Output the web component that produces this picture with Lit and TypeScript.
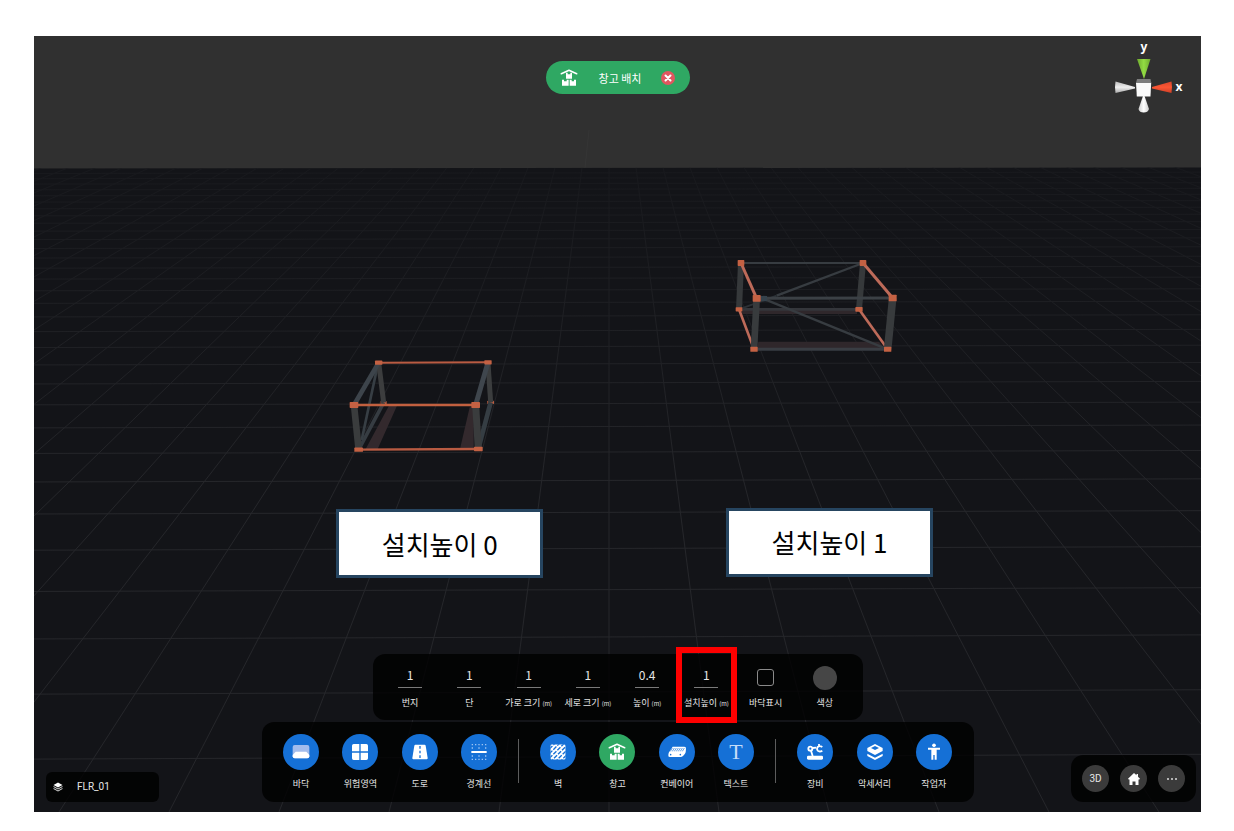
import { LitElement, html, svg, css, SVGTemplateResult } from "lit";
import { customElement, state } from "lit/decorators.js";
import { classMap } from "lit/directives/class-map.js";

type Point = [number, number];

const BLUE = "#1570d6";

const warehouseGlyph = svg`
  <path d="M-23 -13L0 -23L23 -13" fill="none" stroke="#fff" stroke-width="5" stroke-linecap="round" stroke-linejoin="round"/>
  <path fill="#fff" d="M-9 -16H-4V-11H4V-16H9V2H-9Z M-21 5H-15V10H-7V5H-1V23H-21Z M2 5H8V10H15V5H21V23H2Z"/>`;

const icons: Record<string, SVGTemplateResult> = {
  floor: svg`
    <rect x="-25" y="-21" width="50" height="40" rx="6" fill="#a3bcec"/>
    <path fill="#fff" d="M-16 -1H16L25 9V13Q25 19 19 19H-19Q-25 19 -25 13V9Z"/>`,
  danger: svg`<path fill="#fff" d="M-19 -24H-2V-2H-24V-19Q-24 -24 -19 -24Z M2 -24H19Q24 -24 24 -19V-2H2Z M-24 2H-2V24H-19Q-24 24 -24 19Z M2 2H24V19Q24 24 19 24H2Z"/>`,
  road: svg`
    <path fill="#fff" d="M-14 -22H14Q16 -22 17 -19L23 18Q23 22 20 22H-20Q-23 22 -23 18L-17 -19Q-16 -22 -14 -22Z"/>
    <path d="M0 -18V20" stroke=${BLUE} stroke-width="4" stroke-dasharray="8 6"/>`,
  boundary: svg`
    <path d="M-23 0H23" stroke="#fff" stroke-width="6"/>
    <g stroke="#9cc3f3" stroke-width="4" stroke-dasharray="4 6">
      <path d="M-22 -22H23M-22 22H23"/>
      <path stroke-dasharray="4 16" d="M-22 -12H23M-22 12H23"/>
    </g>`,
  wall: svg`
    <clipPath id="wall-clip"><rect x="-23" y="-23" width="46" height="46" rx="5"/></clipPath>
    <g clip-path="url(#wall-clip)">
      <rect x="-23" y="-23" width="46" height="46" fill="#fff"/>
      <path stroke=${BLUE} stroke-width="4" stroke-dasharray="13 4" d="M-26 -9L-9 -26M-26 5L5 -26M-26 19L19 -26M-24 31L31 -24M-10 31L31 -10M4 31L31 4M18 31L31 18"/>
    </g>`,
  warehouse: warehouseGlyph,
  conveyor: svg`
    <path fill="#fff" d="M-13 -16H22Q28 -16 27 -9L26 1Q25 5 21 9L17 13Q15 15 11 15H-22Q-27 15 -26 9L-25 3Q-24 0 -21 -4Z"/>
    <path stroke=${BLUE} stroke-width="2" d="M-14 -12L-20 -2M-8 -12L-14 -2M-2 -12L-8 -2M4 -12L-2 -2M10 -12L4 -2M16 -12L10 -2M22 -12L16 -2"/>
    <circle cx="-19" cy="8" r="2.4" fill=${BLUE}/><circle cx="10" cy="8" r="2.4" fill=${BLUE}/>`,
  text: svg`<text x="0" y="22" text-anchor="middle" font-family="'Liberation Serif', serif" font-size="66" fill="#c5dcf8">T</text>`,
  robot: svg`
    <rect x="-24" y="11" width="48" height="12" rx="4" fill="#fff"/>
    <g fill="none" stroke="#fff" stroke-width="5.5">
      <circle cx="-14" cy="-10" r="6"/>
      <path d="M-8 -12L4 -13M-12 -4L-7 12"/>
      <path d="M12 -24V-18M22 -15Q14 -20 8 -15Q4 -9 8 -4Q14 1 22 -4"/>
    </g>`,
  accessory: svg`
    <path fill="#fff" d="M0 -24L23 -12V-3L0 9L-23 -3V-12Z"/>
    <path fill=${BLUE} d="M0 -18L12 -12L0 -6L-12 -12Z"/>
    <path fill="#fff" d="M-23 5L0 17L23 5V12L0 24L-23 12Z"/>`,
  worker: svg`
    <circle cx="0" cy="-20" r="5.5" fill="#fff"/>
    <path fill="#fff" d="M-18 -13H18V-7H8V23H2V9H-2V23H-8V-7H-18Z"/>`,
};

interface Tool { id: string; label: string }
const TOOL_GROUPS: Tool[][] = [
  [
    { id: "floor", label: "바닥" },
    { id: "danger", label: "위험영역" },
    { id: "road", label: "도로" },
    { id: "boundary", label: "경계선" },
  ],
  [
    { id: "wall", label: "벽" },
    { id: "warehouse", label: "창고" },
    { id: "conveyor", label: "컨베이어" },
    { id: "text", label: "텍스트" },
  ],
  [
    { id: "robot", label: "장비" },
    { id: "accessory", label: "악세서리" },
    { id: "worker", label: "작업자" },
  ],
];

const FIELDS = [
  { label: "번지", unit: "", value: "1" },
  { label: "단", unit: "", value: "1" },
  { label: "가로 크기", unit: "(m)", value: "1" },
  { label: "세로 크기", unit: "(m)", value: "1" },
  { label: "높이", unit: "(m)", value: "0.4" },
  { label: "설치높이", unit: "(m)", value: "1", marked: true },
];

@customElement("scene-canvas")
class SceneCanvas extends LitElement {
  static styles = css`
    :host { display: block; }
    .view { display: block; width: 100%; height: 100%; }
  `;

  /* Floor grid in one-point perspective: rows recede as 1/depth, columns meet at the vanishing point. */
  private grid() {
    const vanish: Point = [609, -42];
    const rows = Array.from({ length: 32 }, (_, n) => -40 + 9030 / (n + 11.3)).filter((y) => y > 172);
    const columns = Array.from({ length: 59 }, (_, i) => i - 29);
    return svg`
      <g stroke="url(#fade)" stroke-width="1" clip-path="url(#ground)">
        ${rows.map((y) => svg`<path d="M34 ${y}L1201 ${y - 0.006 * (y + 40)}"/>`)}
        ${columns.map((k) => svg`<path d="M${vanish[0]} ${vanish[1]}L${vanish[0] + k * 110} 812"/>`)}
      </g>`;
  }

  private beam(a: Point, b: Point, width: number, color: string) {
    return svg`<path d="M${a[0]} ${a[1]}L${b[0]} ${b[1]}" stroke=${color} stroke-width=${width}/>`;
  }

  private node([x, y]: Point, w = 20, h = 16) {
    return svg`<rect x=${x - w / 2} y=${y - h / 2} width=${w} height=${h} rx="2" fill="#c46143"/>`;
  }

  private groundRack() {
    const A: Point = [131, 38], B: Point = [459, 37], C: Point = [57, 165], D: Point = [422, 165];
    const E: Point = [71, 299], F: Point = [430, 297], G: Point = [146, 158], H: Point = [467, 157];
    const orange = "#b95b42";
    return svg`
      <g transform="translate(335 350) scale(0.33333)">
        <path fill="#33292d" d="M163 165H187L128 297H92Z M404 172H416V297H375Z"/>
        ${this.node(G, 18, 10)}${this.node(H, 20, 10)}
        ${this.beam(G, E, 11, "#363c42")}
        ${this.beam([127, 50], [80, 270], 8, "#373e44")}
        ${this.beam(A, G, 15, "#3c3d3e")}
        ${this.beam(A, C, 14, "#3d444b")}
        ${this.beam(H, F, 14, "#353d43")}
        ${this.beam(B, H, 15, "#3b3d3e")}
        ${this.beam(B, D, 15, "#3f464d")}
        ${this.beam(A, B, 6, orange)}
        ${this.beam(C, E, 20, "#3a3c3d")}${this.beam(D, F, 21, "#3a3c3d")}
        ${this.beam(C, D, 8, "#c2603f")}${this.beam(E, F, 7, orange)}
        ${this.node(A, 22, 13)}${this.node(B, 22, 13)}${this.node(C, 26, 18)}${this.node(D, 26, 18)}
        ${this.node(E, 26, 13)}${this.node(F, 26, 13)}
      </g>`;
  }

  private raisedRack() {
    const A: Point = [48, 39], B: Point = [414, 39], C: Point = [95, 145], D: Point = [503, 144];
    const E: Point = [87, 298], F: Point = [488, 298], G: Point = [42, 178], H: Point = [402, 178];
    const orange = "#bd6a59", steel = "#373c41";
    return svg`
      <g transform="translate(725 250) scale(0.33333)">
        <path fill="#2f272b" d="M48 180H396V192H52Z M100 275H462L480 296H96Z"/>
        ${this.beam(G, H, 8, "#34363b")}
        ${this.beam(B, [155, 137], 7, steel)}${this.beam([155, 137], G, 6, "#2c3136")}
        ${this.beam(A, B, 6, steel)}
        ${this.beam(A, G, 18, "#36393b")}${this.beam(B, H, 18, "#36393b")}
        ${this.beam(E, F, 9, "#393d43")}
        ${this.beam(H, F, 8, orange)}${this.beam(G, E, 8, orange)}
        ${this.beam([120, 148], F, 7, steel)}
        ${this.beam(C, D, 9, "#3b4045")}
        ${this.beam(C, [126, 146], 16, "#35424c")}
        ${this.beam(A, C, 9, orange)}${this.beam(B, D, 9, orange)}
        ${this.beam(C, E, 20, "#383b3d")}${this.beam(D, F, 23, "#383b3d")}
        ${this.node(A, 20, 18)}${this.node(B, 20, 18)}${this.node(C, 24, 20)}${this.node(D, 24, 20)}
        ${this.node(E, 22, 15)}${this.node(F, 22, 15)}${this.node(G, 20, 13)}${this.node(H, 22, 14)}
      </g>`;
  }

  render() {
    return html`
      <svg class="view" viewBox="34 36 1167 776" preserveAspectRatio="xMidYMid slice" aria-hidden="true">
        <defs>
          <linearGradient id="fade" gradientUnits="userSpaceOnUse" x1="0" y1="168" x2="0" y2="480">
            <stop offset="0" stop-color="#18191d"/>
            <stop offset="1" stop-color="#25262a"/>
          </linearGradient>
          <clipPath id="ground"><path d="M34 168.5L1201 167.5V812H34Z"/></clipPath>
        </defs>
        <rect x="34" y="36" width="1167" height="776" fill="#303030"/>
        <path d="M585 168L589 130" stroke="#353535"/>
        <path fill="#131418" d="M34 168.5L1201 167.5V812H34Z"/>
        ${this.grid()}${this.groundRack()}${this.raisedRack()}
      </svg>`;
  }
}

@customElement("app-root")
class AppRoot extends LitElement {
  @state() private active = "warehouse";

  static styles = css`
    :host {
      display: block;
      box-sizing: border-box;
      min-height: 100vh;
      padding: 36px 33px 19px 34px;
      background: #fff;
      color: #e6e6e6;
      font-family: "Noto Sans CJK KR", sans-serif;
      font-size: 9px;
      line-height: 12px;
    }
    * { box-sizing: border-box; }
    button, input { font: inherit; color: inherit; margin: 0; padding: 0; border: 0; background: none; }
    button { cursor: pointer; }
    svg { display: block; }

    .scene {
      position: relative;
      display: flex;
      flex-direction: column;
      justify-content: space-between;
      min-height: calc(100vh - 55px);
      overflow: hidden;
    }
    .backdrop { position: absolute; inset: 0; }
    .row {
      position: relative;
      display: grid;
      grid-template-columns: 1fr auto 1fr;
    }
    .top { padding: 0 11px; align-items: start; }
    .bottom { padding: 0 5px 10px; align-items: end; }
    .top > :last-child, .bottom > :last-child { justify-self: end; }
    .panel { background: rgba(0, 0, 0, 0.8); border-radius: 12px; }

    .mode {
      grid-column: 2;
      display: flex;
      align-items: center;
      justify-content: space-between;
      width: 144px;
      height: 33px;
      margin-top: 25px;
      padding: 0 14px 0 13px;
      border-radius: 17px;
      background: #2fa863;
      color: #fff;
      font-size: 11px;
      line-height: 16px;
    }
    .mode svg { width: 20px; height: 20px; }
    .mode .close svg { width: 14px; height: 14px; }
    .axis { width: 80px; height: 80px; }

    .note {
      position: absolute;
      display: grid;
      place-items: center;
      width: 207px;
      height: 69px;
      border: 3px solid #264560;
      background: #fff;
      color: #000;
      font-size: 26px;
      line-height: 32px;
    }
    .note.first { left: 25.9%; top: 61%; }
    .note.second { left: 59.3%; top: 60.8%; }

    .dock { display: flex; flex-direction: column; align-items: center; gap: 2px; }
    .fields {
      display: grid;
      grid-template-columns: repeat(8, 1fr);
      width: 490px;
      padding: 12px 8px 11px;
    }
    .field {
      position: relative;
      display: flex;
      flex-direction: column;
      align-items: center;
      gap: 9px;
      white-space: nowrap;
    }
    .caption { height: 12px; }
    .slot { display: grid; place-items: center; height: 22px; }
    .number {
      width: 24px;
      height: 22px;
      padding-bottom: 5px;
      border-bottom: 1px solid #7a7a7a;
      border-radius: 0;
      outline: none;
      text-align: center;
      font-size: 12px;
      line-height: 16px;
    }
    .unit { font-size: 6px; }
    .tick {
      appearance: none;
      width: 17px;
      height: 17px;
      border: 1px solid #8a8a8a;
      border-radius: 3px;
    }
    .tick:checked { background: #2fa863; }
    .swatch { appearance: none; width: 24px; height: 24px; border-radius: 50%; overflow: hidden; }
    .swatch::-webkit-color-swatch-wrapper { padding: 0; }
    .swatch::-webkit-color-swatch { border: 0; }
    .marker {
      position: absolute;
      inset: -19px -1px -14px;
      border: 6px solid #fe0000;
      pointer-events: none;
      z-index: 1;
    }

    .tools { display: flex; width: 712px; padding: 12px 10px; }
    .tool {
      flex: 1 1 0;
      display: flex;
      flex-direction: column;
      align-items: center;
      gap: 8px;
      white-space: nowrap;
    }
    .disc { width: 36px; height: 36px; border-radius: 50%; background: #1570d6; }
    .tool.active .disc { background: #2fa863; }
    .divider { display: flex; justify-content: center; flex: 0 0 20px; padding: 5px 0 7px; }
    .divider::before { content: ""; width: 1px; background: #5c5c5c; }

    .floor-picker {
      justify-self: start;
      display: flex;
      align-items: center;
      gap: 14px;
      width: 113px;
      height: 30px;
      margin-left: 7px;
      padding: 0 7px;
      border-radius: 6px;
      font-family: Roboto, sans-serif;
      font-size: 10px;
    }
    .floor-picker svg { width: 10px; height: 10px; }
    .views { display: flex; gap: 11px; padding: 10px 11px; }
    .round {
      display: grid;
      place-items: center;
      width: 27px;
      height: 27px;
      border-radius: 50%;
      background: #3b3b3b;
      font-family: Roboto, sans-serif;
      font-size: 10px;
    }
    .round svg { width: 14px; height: 14px; }
  `;

  private axis() {
    return html`
      <svg class="axis" viewBox="1110 36 80 80" role="img" aria-label="x y">
        <defs>
          <linearGradient id="gray" x1="0" y1="0" x2="0" y2="1"><stop offset="0" stop-color="#bbb"/><stop offset=".5" stop-color="#eee"/><stop offset="1" stop-color="#aaa"/></linearGradient>
          <linearGradient id="white" x1="0" y1="0" x2="1" y2="0"><stop offset="0" stop-color="#ccc"/><stop offset=".5" stop-color="#fff"/><stop offset="1" stop-color="#ccc"/></linearGradient>
          <linearGradient id="green" x1="0" y1="0" x2="1" y2="0"><stop offset="0" stop-color="#6da82e"/><stop offset=".5" stop-color="#93dc43"/><stop offset="1" stop-color="#6da82e"/></linearGradient>
          <linearGradient id="red" x1="0" y1="0" x2="0" y2="1"><stop offset="0" stop-color="#d9462b"/><stop offset=".5" stop-color="#fb5634"/><stop offset="1" stop-color="#cd3f26"/></linearGradient>
        </defs>
        <path fill="url(#green)" d="M1137 59H1150.500L1144 79Z"/>
        <path fill="url(#gray)" d="M1115.500 81.500Q1114.500 87 1115.500 93L1135 88.500V87Z"/>
        <path fill="url(#red)" d="M1171.500 81.500Q1172.500 87 1171.500 93L1152 88.500V87Z"/>
        <path fill="url(#white)" d="M1143 96H1144.500L1149 109Q1148 112.500 1143.700 112.500T1138.500 109Z"/>
        <path fill="#fafafa" d="M1136 82.500H1151.200L1150.500 96.500H1136.800Z"/>
        <path fill="#7c7c7c" d="M1137 79H1150.500L1151.200 83H1136Z"/>
        <g fill="#fff" font-family="Noto Sans, sans-serif" font-size="12" font-weight="700" text-anchor="middle">
          <text x="1144" y="51">y</text><text x="1179" y="91">x</text>
        </g>
      </svg>`;
  }

  private tool(t: Tool) {
    return html`
      <button class=${classMap({ tool: true, active: this.active === t.id })} @click=${() => (this.active = t.id)}>
        <svg class="disc" viewBox="-54 -54 108 108" aria-hidden="true">${icons[t.id]}</svg>
        <span>${t.label}</span>
      </button>`;
  }

  render() {
    return html`
      <main class="scene">
        <scene-canvas class="backdrop"></scene-canvas>
        <div class="note first">설치높이 0</div>
        <div class="note second">설치높이 1</div>

        <header class="row top">
          <div class="mode">
            <svg viewBox="-30 -30 60 60" aria-hidden="true">${warehouseGlyph}</svg>
            <span>창고 배치</span>
            <button class="close" aria-label="닫기">
              <svg viewBox="0 0 14 14">
                <circle cx="7" cy="7" r="7" fill="#e0565f"/>
                <path d="M4.500 4.500L9.500 9.500M9.500 4.500L4.500 9.500" stroke="#fff" stroke-width="2" stroke-linecap="round"/>
              </svg>
            </button>
          </div>
          ${this.axis()}
        </header>

        <footer class="row bottom">
          <button class="panel floor-picker">
            <svg viewBox="0 0 20 20" aria-hidden="true">
              <path fill="#fff" d="M10 1L19 6L10 11L1 6Z"/>
              <path fill="#ddd" d="M1 8L10 13L19 8V10L10 15L1 10Z M1 12L10 17L19 12V14L10 19L1 14Z"/>
            </svg>
            <span>FLR_01</span>
          </button>
          <div class="dock">
            <div class="panel fields">
              ${FIELDS.map(
                (f) => html`
                  <label class="field">
                    <input class="number" type="text" inputmode="decimal" .value=${f.value} />
                    <span class="caption">${f.label}${f.unit ? html` <span class="unit">${f.unit}</span>` : null}</span>
                    ${f.marked ? html`<span class="marker"></span>` : null}
                  </label>`
              )}
              <label class="field">
                <span class="slot"><input class="tick" type="checkbox" /></span>
                <span class="caption">바닥표시</span>
              </label>
              <label class="field">
                <span class="slot"><input class="swatch" type="color" value="#464646" /></span>
                <span class="caption">색상</span>
              </label>
            </div>
            <nav class="panel tools">
              ${TOOL_GROUPS.map(
                (group, i) => html`${i ? html`<span class="divider"></span>` : null}${group.map((t) => this.tool(t))}`
              )}
            </nav>
          </div>
          <div class="panel views">
            <button class="round">3D</button>
            <button class="round" aria-label="홈">
              <svg viewBox="0 0 14 14"><path fill="#fff" d="M7 1L9.500 3.300V2H11V4.700L13 6.700L12.300 7.400H11.500V13H8.500V9.500H5.500V13H2.500V7.400H1.700L1 6.700Z"/></svg>
            </button>
            <button class="round" aria-label="더보기">
              <svg viewBox="0 0 14 14"><g fill="#ddd"><circle cx="3" cy="7" r="1"/><circle cx="7" cy="7" r="1"/><circle cx="11" cy="7" r="1"/></g></svg>
            </button>
          </div>
        </footer>
      </main>`;
  }
}
